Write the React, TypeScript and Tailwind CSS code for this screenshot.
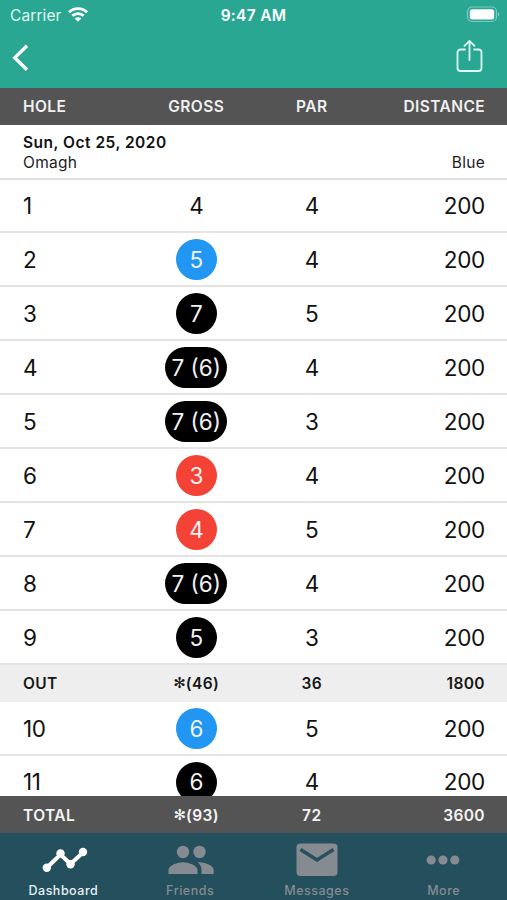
import clsx from 'clsx';

const front = [
  { hole: 1, gross: '4', par: 4, color: '' },
  { hole: 2, gross: '5', par: 4, color: 'bg-[#2196f3]' },
  { hole: 3, gross: '7', par: 5, color: 'bg-black' },
  { hole: 4, gross: '7 (6)', par: 4, color: 'bg-black' },
  { hole: 5, gross: '7 (6)', par: 3, color: 'bg-black' },
  { hole: 6, gross: '3', par: 4, color: 'bg-[#f44336]' },
  { hole: 7, gross: '4', par: 5, color: 'bg-[#f44336]' },
  { hole: 8, gross: '7 (6)', par: 4, color: 'bg-black' },
  { hole: 9, gross: '5', par: 3, color: 'bg-black' },
];

const back = [
  { hole: 10, gross: '6', par: 5, color: 'bg-[#2196f3]' },
  { hole: 11, gross: '6', par: 4, color: 'bg-black' },
];

type Hole = (typeof front)[number];

const HoleRow = ({ hole, gross, par, color }: Hole) => (
  <div className="grid h-[53.95px] shrink-0 grid-cols-4 items-center border-b-2 border-[#e4e4e4] pl-[23px] pr-[22px] pt-[1px] text-[22.5px] tracking-[-0.3px] text-[#111]">
    <span>{hole}</span>
    <span
      className={clsx(
        'flex h-[41px] items-center justify-center justify-self-center rounded-full',
        gross.length > 1 ? 'w-[62px] tracking-[0px]' : 'w-[41px]',
        color,
        color && 'text-[#f2f2f2]'
      )}
    >
      {gross}
    </span>
    <span className="text-center">{par}</span>
    <span className="text-right">200</span>
  </div>
);

const Header = () => (
  <header className="h-[88px] shrink-0 bg-[#2aa793] text-white">
    <div className="grid h-[30px] grid-cols-3 items-center pl-[10px] pr-[7px] text-[16px]">
      <div className="flex items-center gap-[6px] text-[#e0f8f2]">
        <span className="mt-[1px] text-[15.5px] tracking-[0.1px]">Carrier</span>
        <svg className="mt-[-1px]" width="20" height="15" viewBox="0 0 20 15" fill="none" stroke="white" strokeWidth="2.8">
          <path d="M1 5.3a13 13 0 0 1 18 0" />
          <path d="M4.3 8.8a8.3 8.3 0 0 1 11.4 0" />
          <path d="M10 14.8 6.7 11.6a4.7 4.7 0 0 1 6.6 0z" fill="white" stroke="none" />
        </svg>
      </div>
      <span className="mt-[1px] whitespace-nowrap pr-[3px] text-center text-[15.5px] font-semibold tracking-[0.3px]">9:47 AM</span>
      <svg className="mt-[-2px] justify-self-end" width="34" height="17" viewBox="0 0 34 17">
        <rect x="1.5" y="1" width="29" height="14.5" rx="4.5" fill="none" stroke="#7fcabe" strokeWidth="1.2" />
        <rect x="3.8" y="3.2" width="24.4" height="10.2" rx="2.5" fill="white" />
        <path d="M32 6c1.8.8 1.8 3.6 0 4.4z" fill="#7fcabe" />
      </svg>
    </div>
    <div className="flex h-[58px] items-start justify-between pl-[12px] pr-[23px]">
      <svg className="mt-[14px]" width="18" height="28" viewBox="0 0 18 28" fill="none" stroke="white" strokeWidth="3.3">
        <path d="M15 1.8 2.7 13.8l12.3 12" />
      </svg>
      <svg
        className="mt-[9px]"
        width="28"
        height="34"
        viewBox="0 0 28 34"
        fill="none"
        stroke="#ddfaf3"
        strokeWidth="1.8"
        strokeLinecap="round"
        strokeLinejoin="round"
      >
        <path d="M9 10.5H4.5a3 3 0 0 0-3 3V29a3 3 0 0 0 3 3h18a3 3 0 0 0 3-3V13.5a3 3 0 0 0-3-3H18M13.5 21V2M8.5 6.8l5-5 5 5" />
      </svg>
    </div>
  </header>
);

const tabs = [
  {
    label: 'Dashboard',
    icon: (
      <svg className="ml-[3px]" width="46" height="26" viewBox="0 0 46 26" fill="white">
        <path d="M5 20.5 18.5 7.5 28.5 17 41 5.5" fill="none" stroke="white" strokeWidth="4" />
        <circle cx="4.8" cy="20.7" r="4.2" />
        <circle cx="18.5" cy="6.5" r="4.2" />
        <circle cx="28.5" cy="17.3" r="4.2" />
        <circle cx="41" cy="5" r="4.2" />
      </svg>
    ),
  },
  {
    label: 'Friends',
    icon: (
      <svg className="ml-[2px]" width="46" height="30" viewBox="0 0 46 30" fill="currentColor">
        <circle cx="15" cy="7" r="6.2" />
        <circle cx="31.5" cy="7" r="6.2" />
        <path d="M.5 29v-4c0-5 9.7-7.8 14.5-7.8S29.5 20 29.5 25v4z" />
        <path d="M29.5 17.3c.6-.1 1.3-.1 2-.1 4.8 0 14.2 2.8 14.2 7.8v4H33.5v-4c0-3.2-1.6-5.8-4-7.7z" />
      </svg>
    ),
  },
  {
    label: 'Messages',
    icon: (
      <svg width="42" height="34" viewBox="0 0 42 34">
        <rect x=".5" y=".5" width="41" height="32.5" rx="4" fill="currentColor" />
        <path d="M4.5 6.5 21 17 37.5 6.5" fill="none" stroke="#26505c" strokeWidth="3.5" />
      </svg>
    ),
  },
  {
    label: 'More',
    icon: (
      <svg className="mr-[2px]" width="34" height="10" viewBox="0 0 34 10" fill="currentColor">
        <circle cx="5.2" cy="5" r="4.6" />
        <circle cx="17" cy="5" r="4.6" />
        <circle cx="28.8" cy="5" r="4.6" />
      </svg>
    ),
  },
];

const TabBar = () => (
  <nav className="grid h-[67px] shrink-0 grid-cols-4 bg-[#244f5d]">
    {tabs.map((tab, i) => (
      <div key={tab.label} className={clsx('flex flex-col items-center', i === 0 ? 'text-[#e6f2f4]' : 'text-[#858b90]')}>
        <div className="flex h-[53px] items-center">{tab.icon}</div>
        <span className="mt-[-3px] text-[12.5px] font-medium leading-[16px] tracking-[0.5px]">{tab.label}</span>
      </div>
    ))}
  </nav>
);

const Star = () => (
  <span className="font-['DejaVu_Sans',sans-serif] text-[15px] font-normal leading-none tracking-[0px]">✻</span>
);

export default function App() {
  return (
    <div className="flex h-[900px] w-[507px] flex-col overflow-hidden bg-white font-['Inter',sans-serif]">
      <Header />
      <div className="grid h-[37px] shrink-0 grid-cols-4 items-center bg-[#545454] pl-[23px] pr-[22px] pt-[1px] text-[15.5px] font-semibold tracking-[0.4px] text-[#f0f0f0]">
        <span>HOLE</span>
        <span className="text-center">GROSS</span>
        <span className="text-center">PAR</span>
        <span className="text-right">DISTANCE</span>
      </div>
      <div className="flex min-h-0 flex-1 flex-col overflow-hidden">
        <div className="flex h-[54.5px] shrink-0 items-end justify-between border-b-2 border-[#e0e0e0] pb-[5px] pl-[23px] pr-[22px] text-[15.5px] leading-[20px] text-[#1c1c1c]">
          <div>
            <p className="font-semibold tracking-[0.5px] text-[#111]">Sun, Oct 25, 2020</p>
            <p className="tracking-[0.3px]">Omagh</p>
          </div>
          <p className="tracking-[0.3px]">Blue</p>
        </div>
        {front.map((row) => (
          <HoleRow key={row.hole} {...row} />
        ))}
        <div className="grid h-[37px] shrink-0 grid-cols-4 items-center bg-[#eeeeee] pl-[23px] pr-[22px] text-[15.5px] font-semibold tracking-[0.4px] text-[#161616]">
          <span>OUT</span>
          <span className="flex items-center justify-center">
            <Star />
            (46)
          </span>
          <span className="text-center">36</span>
          <span className="text-right">1800</span>
        </div>
        {back.map((row) => (
          <HoleRow key={row.hole} {...row} />
        ))}
      </div>
      <div className="grid h-[37px] shrink-0 grid-cols-4 items-center bg-[#545454] pl-[23px] pr-[22px] pt-[2px] text-[15.5px] font-semibold tracking-[0.4px] text-[#f4f4f4]">
        <span>TOTAL</span>
        <span className="flex items-center justify-center">
          <Star />
          (93)
        </span>
        <span className="text-center">72</span>
        <span className="text-right">3600</span>
      </div>
      <TabBar />
    </div>
  );
}
